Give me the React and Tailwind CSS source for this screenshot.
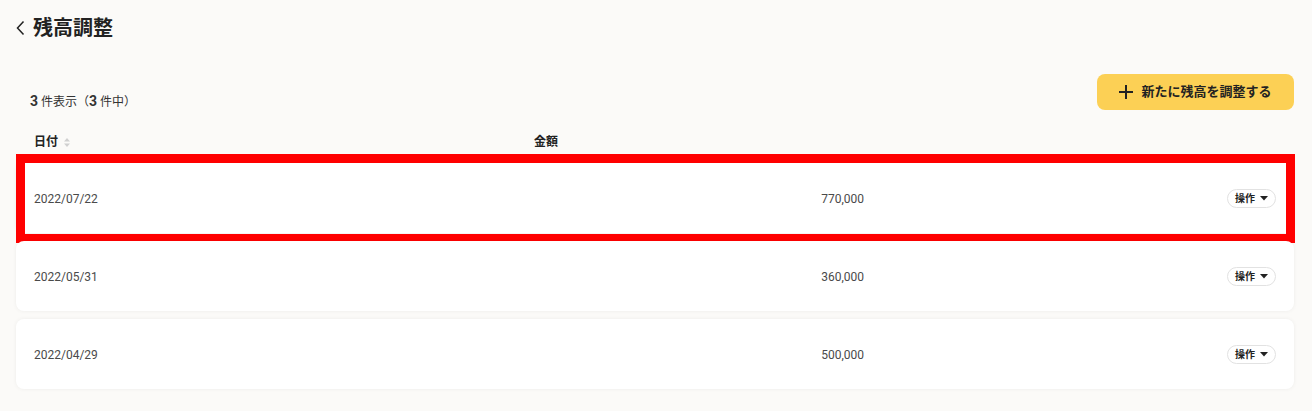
import React from "react";

const font = { fontFamily: "Roboto, 'Noto Sans CJK JP', sans-serif" };

function Caret() {
  return (
    <svg width="8" height="5" viewBox="0 0 8 5" className="ml-[5px]">
      <path d="M0 0 L8 0 L4 4.5 Z" fill="#222" />
    </svg>
  );
}

function Row({ date, amount, highlight }) {
  return (
    <div className="relative bg-white rounded-lg shadow-[0_0_4px_rgba(0,0,0,0.06)] h-[70px] grid grid-cols-[500px_330px_1fr] items-center px-[18px]">
      <div className="text-[12px] text-[#4a4a4a] pt-[1px]">{date}</div>
      <div className="text-[12px] text-[#4a4a4a] text-right pt-[1px]">{amount}</div>
      <div className="flex justify-end">
        <button className="flex items-center h-[19px] px-[7px] rounded-full border border-[#e2e2e2] bg-white text-[10px] font-bold text-[#222]">
          操作
          <Caret />
        </button>
      </div>
      {highlight && (
        <div className="absolute left-0 right-[-1px] top-[-9px] bottom-[-10px] border-[9px] border-[#ff0000] pointer-events-none" />
      )}
    </div>
  );
}

export default function App() {
  return (
    <div className="min-h-[411px] bg-[#fbfaf8] pl-4 pr-[18px]" style={font}>
      <div className="h-14 flex items-center">
        <svg width="9" height="16" viewBox="0 0 9 16" className="mr-[8px]">
          <path d="M7.5 1.5 L1.5 8 L7.5 14.5" fill="none" stroke="#222" strokeWidth="1.5" />
        </svg>
        <h1 className="text-[20px] font-bold text-[#222] leading-none">残高調整</h1>
      </div>
      <div className="mt-[18px] flex justify-between items-end">
        <div className="pl-[14px] mb-[-2px] text-[12px] text-[#333]">
          <span className="text-[14px] font-bold">3</span> 件表示（<span className="text-[14px] font-bold">3</span> 件中）
        </div>
        <button className="h-9 w-[197px] rounded-lg bg-[#fcd055] flex items-center justify-center text-[13px] font-bold text-[#222]">
          <svg width="14" height="14" viewBox="0 0 14 14" className="mr-[8px]">
            <path d="M7 0 V14 M0 7 H14" stroke="#222" strokeWidth="2" />
          </svg>
          新たに残高を調整する
        </button>
      </div>
      <div className="mt-[22px] h-5 grid grid-cols-[500px_330px_1fr] items-center px-[18px] text-[12px] font-bold text-[#222]">
        <div className="flex items-center">
          日付
          <svg width="6" height="9" viewBox="0 0 6 9" className="ml-[6px]">
            <path d="M3 0 L6 3.5 H0 Z M3 9 L0 5.5 H6 Z" fill="#d0d0d0" />
          </svg>
        </div>
        <div>金額</div>
        <div />
      </div>
      <div className="mt-[11px] flex flex-col gap-2">
        <Row date="2022/07/22" amount="770,000" highlight />
        <Row date="2022/05/31" amount="360,000" />
        <Row date="2022/04/29" amount="500,000" />
      </div>
    </div>
  );
}
